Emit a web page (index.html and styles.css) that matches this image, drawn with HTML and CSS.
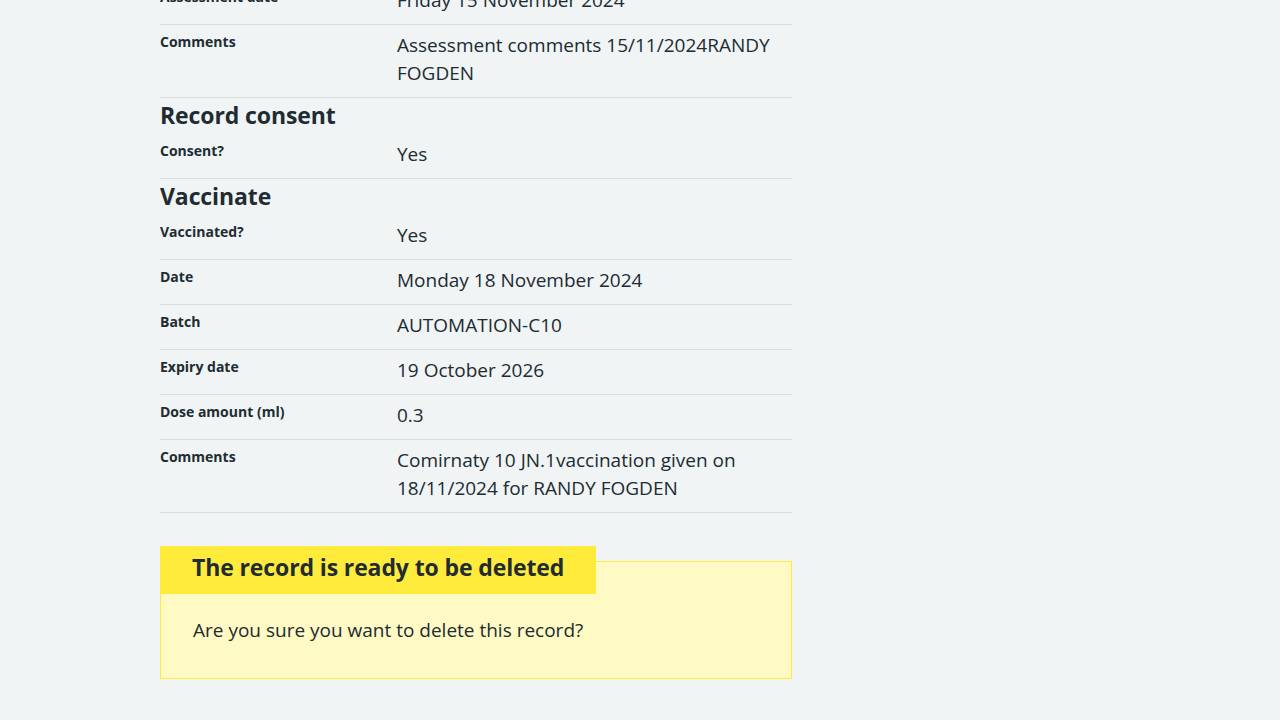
FILE: index.html
```html
<!DOCTYPE html>
<html lang="en">
<head>
<meta charset="utf-8">
<title>Delete vaccination record</title>
<link rel="stylesheet" href="styles.css">
</head>
<body>
<main class="page">
  <div class="content">
    <dl class="summary">
      <div class="row">
        <dt class="key">Assessment date</dt>
        <dd class="value">Friday 15 November 2024</dd>
      </div>
      <div class="row">
        <dt class="key">Comments</dt>
        <dd class="value">Assessment comments 15/11/2024RANDY FOGDEN</dd>
      </div>
    </dl>

    <h2 class="section-title">Record consent</h2>
    <dl class="summary">
      <div class="row">
        <dt class="key">Consent?</dt>
        <dd class="value">Yes</dd>
      </div>
    </dl>

    <h2 class="section-title">Vaccinate</h2>
    <dl class="summary">
      <div class="row">
        <dt class="key">Vaccinated?</dt>
        <dd class="value">Yes</dd>
      </div>
      <div class="row">
        <dt class="key">Date</dt>
        <dd class="value">Monday 18 November 2024</dd>
      </div>
      <div class="row">
        <dt class="key">Batch</dt>
        <dd class="value">AUTOMATION-C10</dd>
      </div>
      <div class="row">
        <dt class="key">Expiry date</dt>
        <dd class="value">19 October 2026</dd>
      </div>
      <div class="row">
        <dt class="key">Dose amount (ml)</dt>
        <dd class="value">0.3</dd>
      </div>
      <div class="row">
        <dt class="key">Comments</dt>
        <dd class="value">Comirnaty 10 JN.1vaccination given on 18/11/2024 for RANDY FOGDEN</dd>
      </div>
    </dl>

    <div class="callout">
      <h3 class="callout-label">The record is ready to be deleted</h3>
      <p class="callout-text">Are you sure you want to delete this record?</p>
    </div>
  </div>
</main>
</body>
</html>
```
FILE: styles.css
```css
* { box-sizing: border-box; }

html, body {
  margin: 0;
  padding: 0;
  background: #f0f4f5;
}

body {
  color: #212b32;
  font-family: "Open Sans", "Noto Sans", Arial, sans-serif;
}

.page {
  padding: 0 160px;
}

.content {
  width: 632px;
  margin-top: -20px;
}

.summary {
  margin: 0;
}

.row {
  display: grid;
  grid-template-columns: 237px 1fr;
  border-bottom: 1px solid #d8dde0;
  padding: 6px 0 10px;
}

.key {
  margin: -1px 0 0;
  font-size: 14px;
  line-height: 24px;
  font-weight: 700;
}

.value {
  margin: 0;
  font-size: 19px;
  line-height: 28px;
}

.section-title {
  margin: 0;
  padding: 0 0 2px;
  font-size: 23px;
  line-height: 34px;
  font-weight: 700;
  letter-spacing: -0.1px;
}

.callout {
  margin-top: 48px;
  background: #fff9c4;
  border: 1px solid #ffeb3b;
  padding: 0 32px 34px;
}

.callout-label {
  display: block;
  width: fit-content;
  margin: -16px 0 0 -33px;
  padding: 0 32px 6px;
  background: #ffeb3b;
  font-size: 23px;
  line-height: 42px;
  font-weight: 700;
  letter-spacing: -0.12px;
}

.callout-text {
  margin: 22px 0 0;
  font-size: 19px;
  line-height: 28px;
}
```
